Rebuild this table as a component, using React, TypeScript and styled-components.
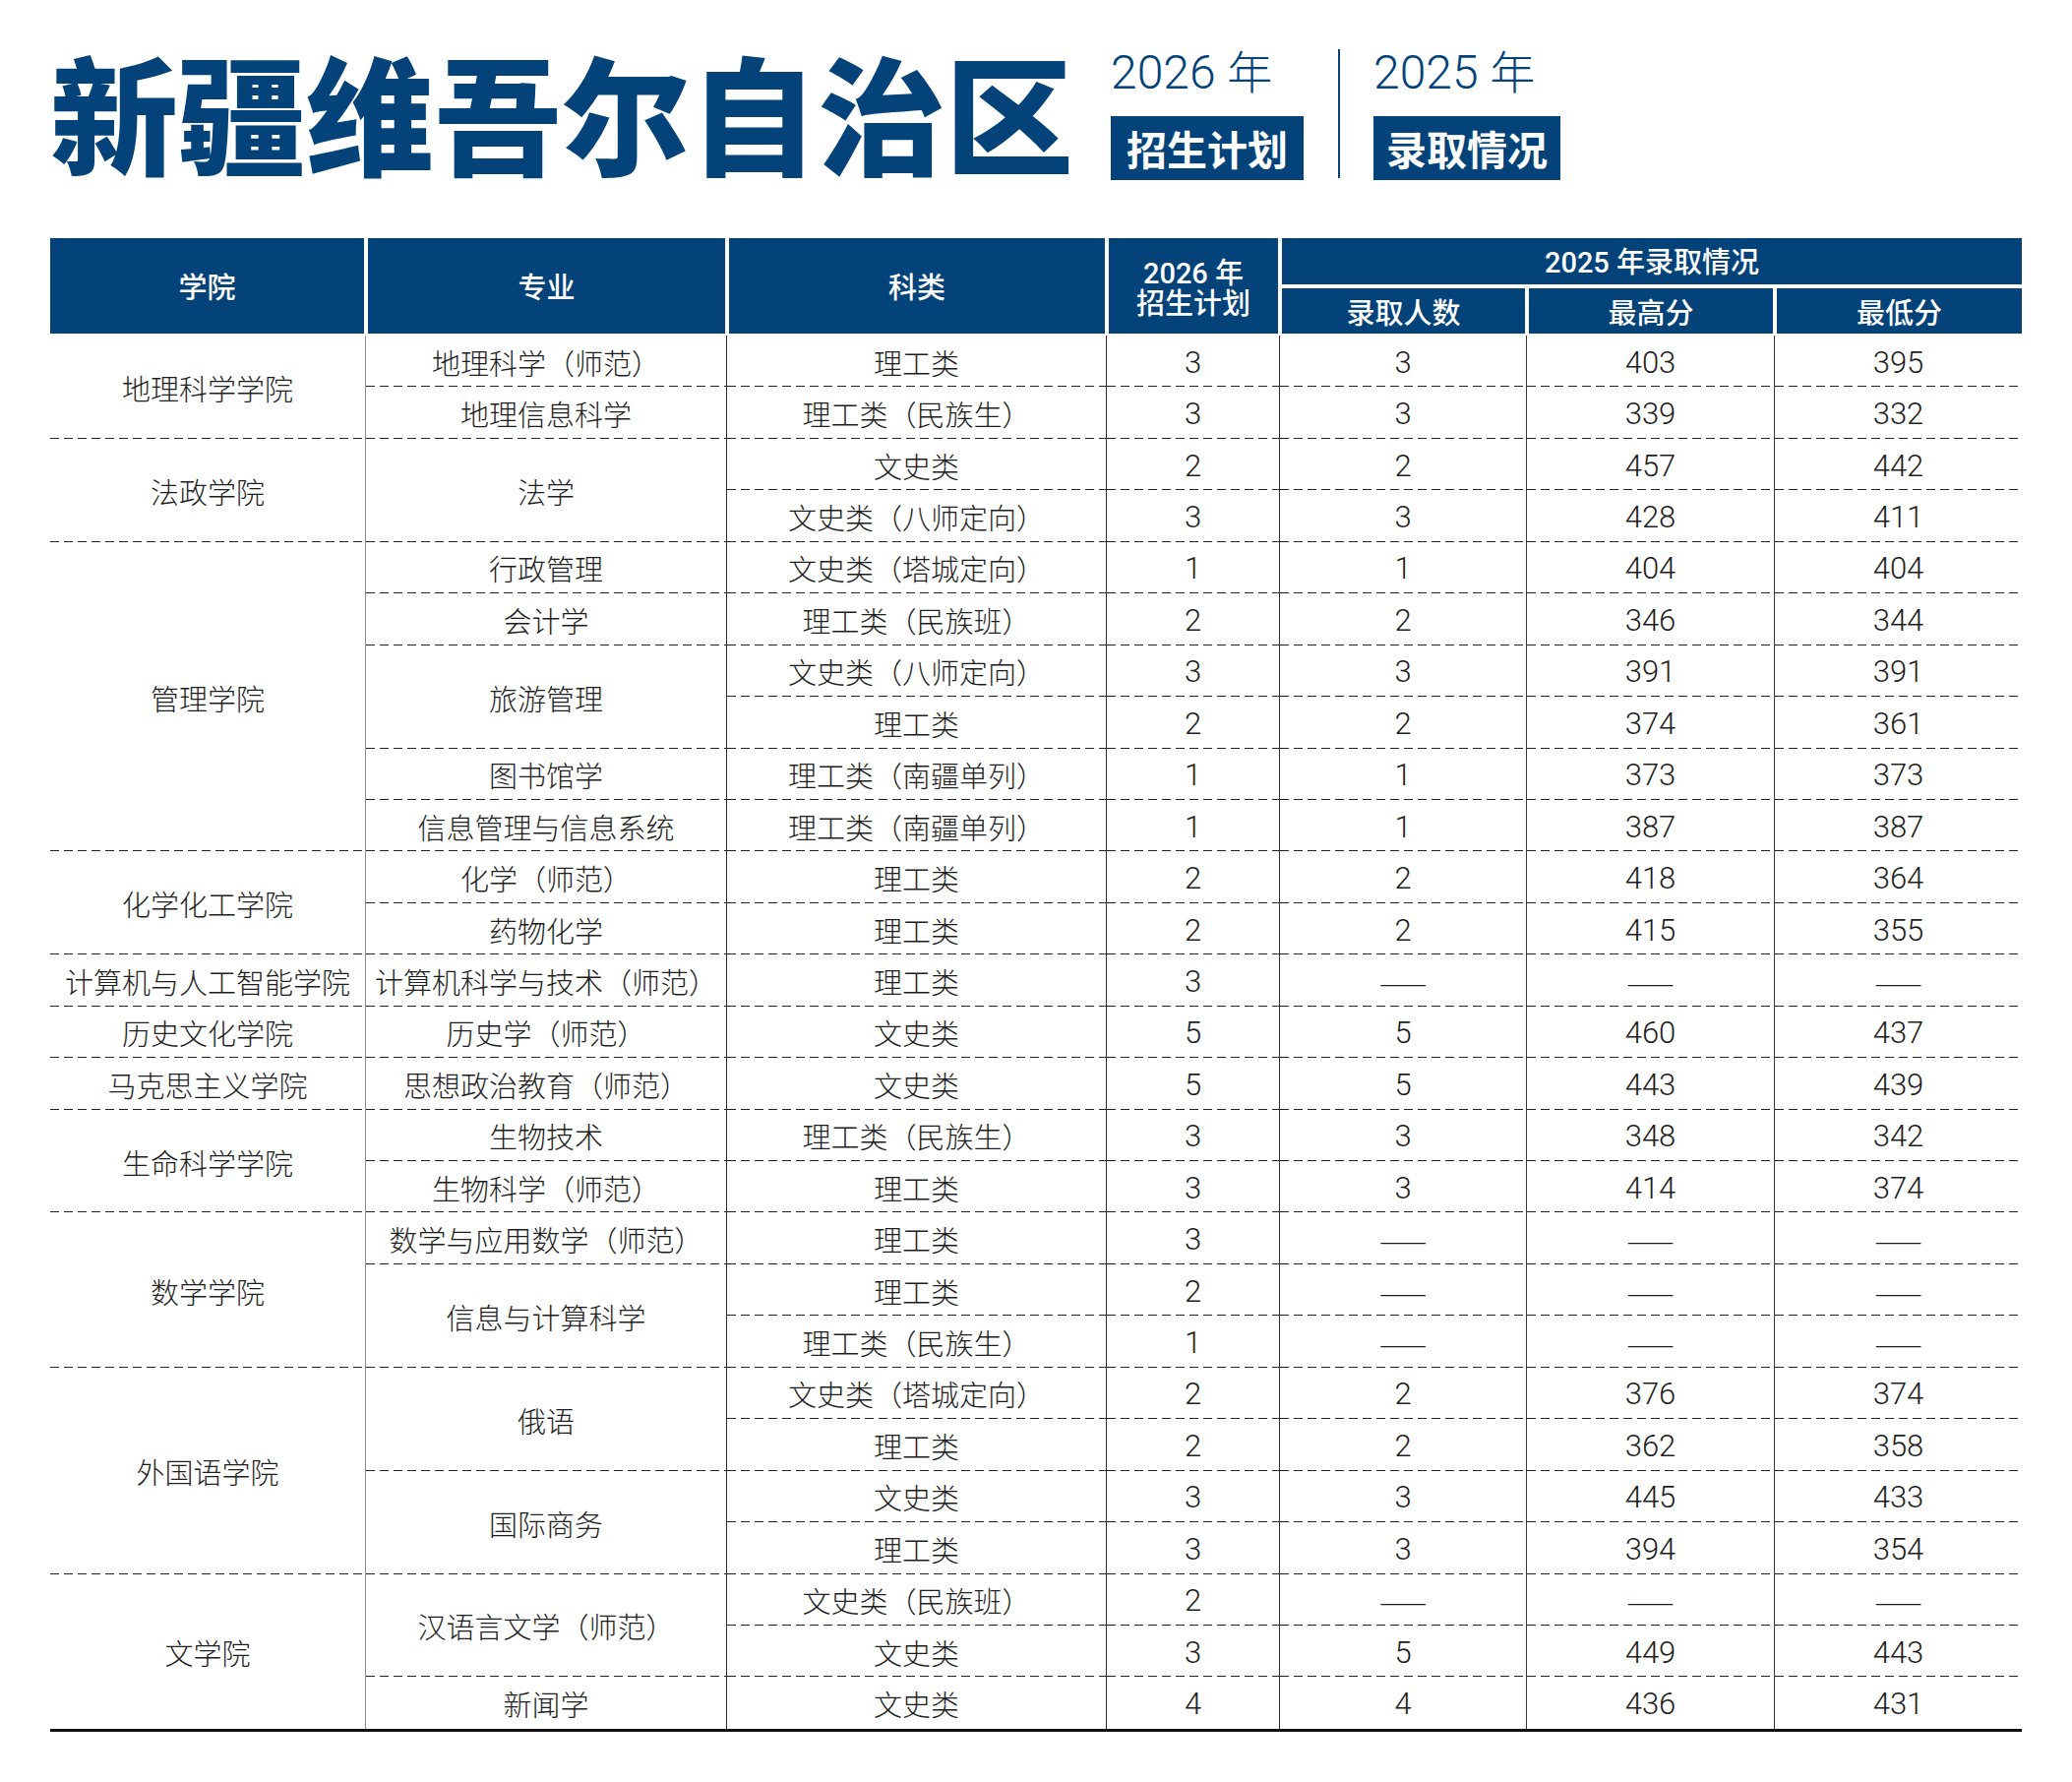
import React from "react";
import styled, { createGlobalStyle } from "styled-components";

const BLUE = "#03437a";
const CJK = `"Noto Sans CJK SC", "Noto Sans", sans-serif`;
const NUM = `Roboto, "Liberation Sans", "Noto Sans CJK SC", sans-serif`;

const GlobalStyle = createGlobalStyle`
  html, body { margin: 0; padding: 0; background: #fff; }
  body { font-family: ${CJK}; color: #1a1a1a; }
`;

const Page = styled.div`
  width: 2106px;
  box-sizing: border-box;
  padding: 46px 51px 40px;
`;

const Masthead = styled.header`
  display: flex;
  align-items: flex-start;
`;

const Title = styled.h1`
  margin: 0;
  font-family: ${CJK};
  font-weight: 900;
  font-size: 130px;
  line-height: 130px;
  color: ${BLUE};
  white-space: nowrap;
`;

const YearGroup = styled.div<{ $ml: number }>`
  display: flex;
  flex-direction: column;
  align-items: flex-start;
  margin-left: ${(p) => p.$ml}px;
`;

const YearLabel = styled.div`
  font-family: ${NUM};
  font-weight: 300;
  font-size: 48px;
  line-height: 48px;
  color: ${BLUE};
  white-space: nowrap;
`;

const YearChar = styled.span`
  font-family: ${CJK};
  font-weight: 300;
  font-size: 46px;
`;

const Badge = styled.div<{ $w: number }>`
  margin-top: 20px;
  width: ${(p) => p.$w}px;
  height: 65px;
  background: ${BLUE};
  color: #fff;
  font-family: ${CJK};
  font-weight: 700;
  font-size: 41px;
  line-height: 65px;
  text-align: center;
`;

const Divider = styled.div`
  width: 2px;
  height: 131px;
  margin: 4px 34px 0 35px;
  background: ${BLUE};
`;

const Table = styled.section`
  margin-top: 59px;
  width: 2004px;
`;

const COLS = "321px 367px 386px 176px 251px 252px 251px";

const HeadGrid = styled.div`
  display: grid;
  grid-template-columns: ${COLS};
  grid-template-rows: 47px 4px 46px;
`;

const HeadCell = styled.div<{ $col: string; $row: string; $first?: boolean; $last?: boolean }>`
  grid-column: ${(p) => p.$col};
  grid-row: ${(p) => p.$row};
  margin-left: ${(p) => (p.$first ? 0 : 2)}px;
  margin-right: ${(p) => (p.$last ? 0 : 2)}px;
  background: ${BLUE};
  color: #fff;
  display: flex;
  flex-direction: column;
  align-items: center;
  justify-content: center;
  font-family: ${NUM};
  font-weight: 500;
  font-size: 29px;
  line-height: 31px;
  text-align: center;
  white-space: nowrap;
`;

const HeadLine = styled.span`
  display: block;
  height: 31px;
  line-height: 31px;
`;

const HeadCJK = styled.span`
  font-family: ${CJK};
  font-weight: 500;
`;

const BodyGrid = styled.div`
  display: grid;
  margin-top: 2px;
  grid-template-columns: ${COLS};
  grid-template-rows: repeat(27, 52.44px);
  border-bottom: 3px solid #111;
`;

const BodyCell = styled.div<{
  $col: number;
  $row: number;
  $span: number;
  $dashed: boolean;
  $rule: string;
  $num?: boolean;
}>`
  grid-column: ${(p) => p.$col};
  grid-row: ${(p) => `${p.$row} / span ${p.$span}`};
  display: flex;
  align-items: center;
  justify-content: center;
  box-sizing: border-box;
  padding-top: 2px;
  border-right: ${(p) => (p.$rule === "none" ? "none" : `1px solid ${p.$rule}`)};
  background-image: ${(p) =>
    p.$dashed ? "linear-gradient(to right, #222 9px, transparent 9px)" : "none"};
  background-size: 14px 1px;
  background-repeat: repeat-x;
  background-position: left bottom;
  font-family: ${(p) => (p.$num ? NUM : CJK)};
  font-weight: 300;
  font-size: ${(p) => (p.$num ? 31 : 29)}px;
  line-height: 1;
  color: #1e1e1e;
  white-space: nowrap;
`;

const Dash = styled.span`
  font-family: ${CJK};
  font-weight: 300;
  font-size: 29px;
  color: #1e1e1e;
`;

type Span = { text: string; span: number };

const colleges: Span[] = [
  { text: "地理科学学院", span: 2 },
  { text: "法政学院", span: 2 },
  { text: "管理学院", span: 6 },
  { text: "化学化工学院", span: 2 },
  { text: "计算机与人工智能学院", span: 1 },
  { text: "历史文化学院", span: 1 },
  { text: "马克思主义学院", span: 1 },
  { text: "生命科学学院", span: 2 },
  { text: "数学学院", span: 3 },
  { text: "外国语学院", span: 4 },
  { text: "文学院", span: 3 },
];

const majors: Span[] = [
  { text: "地理科学（师范）", span: 1 },
  { text: "地理信息科学", span: 1 },
  { text: "法学", span: 2 },
  { text: "行政管理", span: 1 },
  { text: "会计学", span: 1 },
  { text: "旅游管理", span: 2 },
  { text: "图书馆学", span: 1 },
  { text: "信息管理与信息系统", span: 1 },
  { text: "化学（师范）", span: 1 },
  { text: "药物化学", span: 1 },
  { text: "计算机科学与技术（师范）", span: 1 },
  { text: "历史学（师范）", span: 1 },
  { text: "思想政治教育（师范）", span: 1 },
  { text: "生物技术", span: 1 },
  { text: "生物科学（师范）", span: 1 },
  { text: "数学与应用数学（师范）", span: 1 },
  { text: "信息与计算科学", span: 2 },
  { text: "俄语", span: 2 },
  { text: "国际商务", span: 2 },
  { text: "汉语言文学（师范）", span: 2 },
  { text: "新闻学", span: 1 },
];

type Row = [string, string, string, string, string];

const rows: Row[] = [
  ["理工类", "3", "3", "403", "395"],
  ["理工类（民族生）", "3", "3", "339", "332"],
  ["文史类", "2", "2", "457", "442"],
  ["文史类（八师定向）", "3", "3", "428", "411"],
  ["文史类（塔城定向）", "1", "1", "404", "404"],
  ["理工类（民族班）", "2", "2", "346", "344"],
  ["文史类（八师定向）", "3", "3", "391", "391"],
  ["理工类", "2", "2", "374", "361"],
  ["理工类（南疆单列）", "1", "1", "373", "373"],
  ["理工类（南疆单列）", "1", "1", "387", "387"],
  ["理工类", "2", "2", "418", "364"],
  ["理工类", "2", "2", "415", "355"],
  ["理工类", "3", "-", "-", "-"],
  ["文史类", "5", "5", "460", "437"],
  ["文史类", "5", "5", "443", "439"],
  ["理工类（民族生）", "3", "3", "348", "342"],
  ["理工类", "3", "3", "414", "374"],
  ["理工类", "3", "-", "-", "-"],
  ["理工类", "2", "-", "-", "-"],
  ["理工类（民族生）", "1", "-", "-", "-"],
  ["文史类（塔城定向）", "2", "2", "376", "374"],
  ["理工类", "2", "2", "362", "358"],
  ["文史类", "3", "3", "445", "433"],
  ["理工类", "3", "3", "394", "354"],
  ["文史类（民族班）", "2", "-", "-", "-"],
  ["文史类", "3", "5", "449", "443"],
  ["文史类", "4", "4", "436", "431"],
];

const TOTAL = rows.length;
const RULES = ["#8c8c8c", "#2a2a2a", "#2a2a2a", "#2a2a2a", "#3a3a3a", "#3a3a3a", "none"];

function spanCells(list: Span[], col: number, num?: boolean) {
  let r = 1;
  return list.map((s, i) => {
    const row = r;
    r += s.span;
    return (
      <BodyCell
        key={`${col}-${i}`}
        $col={col}
        $row={row}
        $span={s.span}
        $dashed={row + s.span - 1 < TOTAL}
        $rule={RULES[col - 1]}
        $num={num}
      >
        {s.text}
      </BodyCell>
    );
  });
}

export default function App() {
  return (
    <>
      <GlobalStyle />
      <Page>
        <Masthead>
          <Title>新疆维吾尔自治区</Title>
          <YearGroup $ml={38}>
            <YearLabel>
              2026 <YearChar>年</YearChar>
            </YearLabel>
            <Badge $w={196}>招生计划</Badge>
          </YearGroup>
          <Divider />
          <YearGroup $ml={0}>
            <YearLabel>
              2025 <YearChar>年</YearChar>
            </YearLabel>
            <Badge $w={190}>录取情况</Badge>
          </YearGroup>
        </Masthead>

        <Table>
          <HeadGrid>
            <HeadCell $col="1" $row="1 / 4" $first>
              <HeadCJK>学院</HeadCJK>
            </HeadCell>
            <HeadCell $col="2" $row="1 / 4">
              <HeadCJK>专业</HeadCJK>
            </HeadCell>
            <HeadCell $col="3" $row="1 / 4">
              <HeadCJK>科类</HeadCJK>
            </HeadCell>
            <HeadCell $col="4" $row="1 / 4">
              <HeadLine>
                2026 <HeadCJK>年</HeadCJK>
              </HeadLine>
              <HeadLine>
                <HeadCJK>招生计划</HeadCJK>
              </HeadLine>
            </HeadCell>
            <HeadCell $col="5 / 8" $row="1 / 2" $last>
              <span>
                2025 <HeadCJK>年录取情况</HeadCJK>
              </span>
            </HeadCell>
            <HeadCell $col="5" $row="3 / 4">
              <HeadCJK>录取人数</HeadCJK>
            </HeadCell>
            <HeadCell $col="6" $row="3 / 4">
              <HeadCJK>最高分</HeadCJK>
            </HeadCell>
            <HeadCell $col="7" $row="3 / 4" $last>
              <HeadCJK>最低分</HeadCJK>
            </HeadCell>
          </HeadGrid>

          <BodyGrid>
            {spanCells(colleges, 1)}
            {spanCells(majors, 2)}
            {rows.map((r, i) =>
              r.map((v, j) => {
                const col = j + 3;
                const isNum = j > 0;
                return (
                  <BodyCell
                    key={`r${i}c${col}`}
                    $col={col}
                    $row={i + 1}
                    $span={1}
                    $dashed={i + 1 < TOTAL}
                    $rule={RULES[col - 1]}
                    $num={isNum}
                  >
                    {v === "-" ? <Dash>——</Dash> : v}
                  </BodyCell>
                );
              })
            )}
          </BodyGrid>
        </Table>
      </Page>
    </>
  );
}
